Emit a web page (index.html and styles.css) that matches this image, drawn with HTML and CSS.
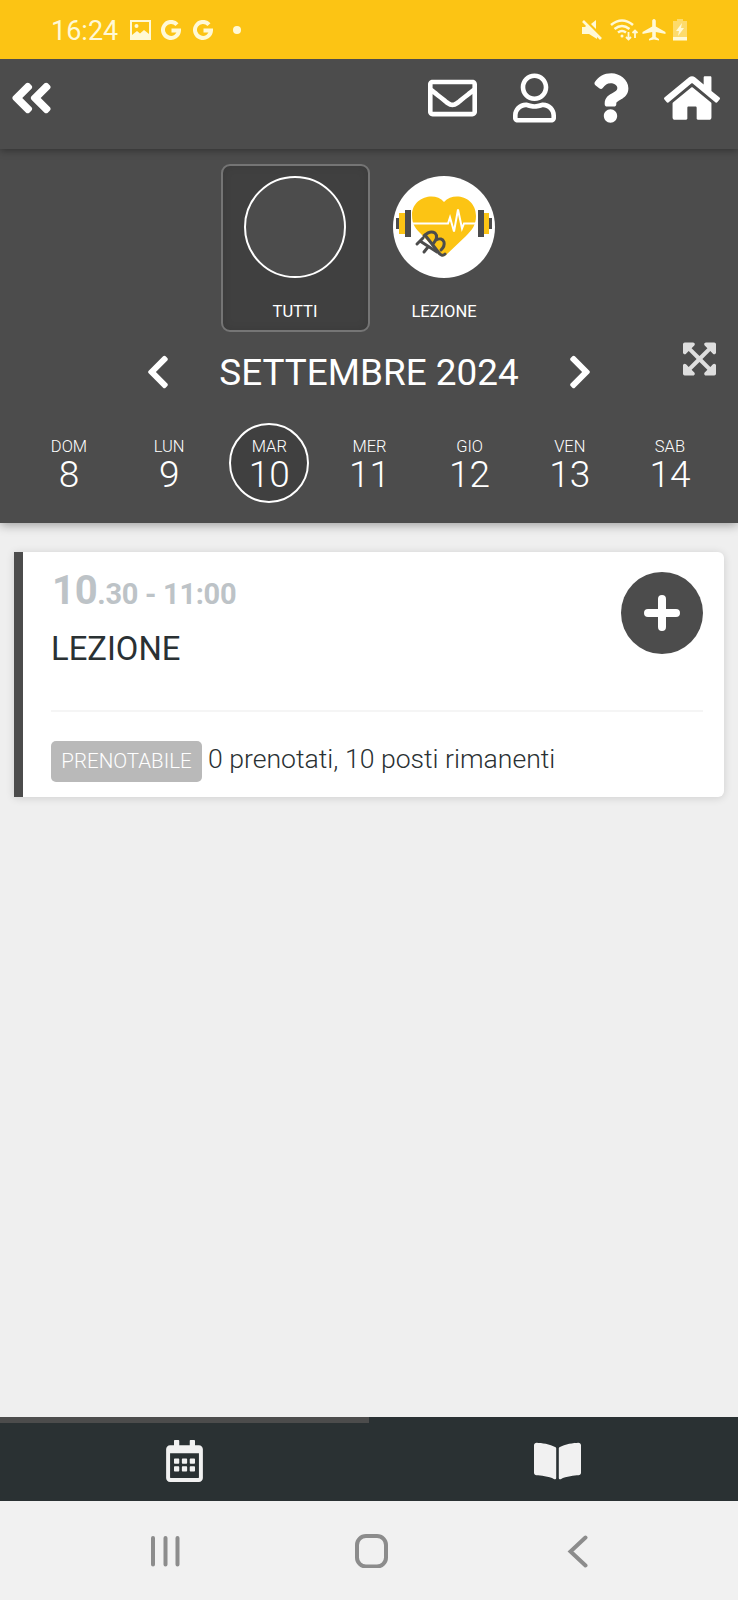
FILE: index.html
```
<!DOCTYPE html>
<html lang="it">
<head>
    <meta charset="UTF-8">
    <meta name="viewport" content="width=device-width, initial-scale=1.0">
    <title>Prenotazioni</title>
    <link rel="stylesheet" href="styles.css">
</head>
<body>
    <!-- Android status bar -->
    <div class="status-bar">
        <div class="status-left">
            <span class="clock">16:24</span>
            <svg class="status-picture" viewBox="0 0 21 20"><path fill-rule="evenodd" d="M0 0h21v20H0zM2 2v13l5-4 3 2.500 4-3.500 5 4V2z"/><circle cx="6.500" cy="6" r="2"/></svg>
            <svg class="status-google" viewBox="0 0 20 20"><path d="M16 4.600A8 8 0 1 0 18 10.500H10.500"/></svg>
            <svg class="status-google" viewBox="0 0 20 20"><path d="M16 4.600A8 8 0 1 0 18 10.500H10.500"/></svg>
            <span class="dot"></span>
        </div>
        <svg class="status-right" viewBox="0 0 108 22">
            <!-- mute -->
            <path d="M1 8h3l2-2 10 10v4l-8-5H1zM10 5l5-4v9z"/>
            <path class="line" d="M2 2l18 18"/>
            <!-- wifi -->
            <path class="line" d="M30 6q11-9 22 0M33.500 10q7.500-6 15 0M37 13.500q4-3 8 0"/>
            <circle cx="41" cy="17" r="1.500"/>
            <path class="thin" d="M47.500 13v7M45 18l2.500 2.500L50 18M54 19v-7M51.500 14l2.500-2.500 2.500 2.500"/>
            <!-- airplane -->
            <path d="M73 0c1.200 0 1.800 1 1.800 2v5.500l9.700 5.500v2l-9.700-2v5l3.200 2v1.500L73 20.500l-5 1V20l3.200-2v-5l-9.700 2v-2l9.700-5.500V2c0-1 .6-2 1.800-2z"/>
            <!-- battery -->
            <path class="faded" d="M96 0h6v2h4v16H92V2h4z"/>
            <path d="M92 18h14v3.500H92zM101 4l-6 8h3l-1 5 6-8h-3z"/>
        </svg>
    </div>

    <div class="toolbar">
        <svg class="icon-back" viewBox="0 0 448 512"><path d="M223.700 239l136-136c9.400-9.400 24.600-9.400 33.900 0l22.600 22.600c9.400 9.400 9.400 24.600 0 33.900L319.900 256l96.400 96.400c9.400 9.400 9.400 24.600 0 33.900L393.700 409c-9.400 9.400-24.600 9.400-33.900 0l-136-136c-9.500-9.400-9.500-24.600-.1-34zm-192 34l136 136c9.400 9.400 24.600 9.400 33.900 0l22.600-22.600c9.400-9.400 9.400-24.600 0-33.900L127.900 256l96.400-96.400c9.400-9.400 9.400-24.600 0-33.900L201.700 103c-9.400-9.400-24.600-9.400-33.900 0l-136 136c-9.500 9.400-9.500 24.600-.1 34z"/></svg>
        <div class="toolbar-actions">
            <svg class="icon-mail" viewBox="0 0 512 512"><path d="M464 64H48C21.490 64 0 85.490 0 112v288c0 26.510 21.490 48 48 48h416c26.510 0 48-21.490 48-48V112c0-26.510-21.490-48-48-48zm0 48v40.805c-22.422 18.259-58.168 46.651-134.587 106.490-16.841 13.247-50.201 45.072-73.413 44.701-23.208.375-56.579-31.459-73.413-44.701C106.180 199.465 70.425 171.067 48 152.805V112h416zM48 400V214.398c22.914 18.251 55.409 43.862 104.938 82.646 21.857 17.205 60.134 55.186 103.062 54.955 42.717.231 80.509-37.199 103.053-54.947 49.528-38.783 82.032-64.401 104.947-82.653V400H48z"/></svg>
            <svg class="icon-user" viewBox="0 0 448 512"><path d="M313.600 304c-28.700 0-42.500 16-89.600 16-47.100 0-60.800-16-89.600-16C60.200 304 0 364.200 0 438.400V464c0 26.500 21.500 48 48 48h352c26.500 0 48-21.500 48-48v-25.600c0-74.200-60.200-134.400-134.400-134.400zM400 464H48v-25.600c0-47.600 38.800-86.400 86.400-86.400 14.600 0 38.300 16 89.600 16 51.700 0 74.900-16 89.600-16 47.600 0 86.400 38.800 86.400 86.400V464zM224 288c79.500 0 144-64.500 144-144S303.500 0 224 0 80 64.500 80 144s64.500 144 144 144zm0-240c52.900 0 96 43.100 96 96s-43.100 96-96 96-96-43.100-96-96 43.100-96 96-96z"/></svg>
            <svg class="icon-help" viewBox="0 0 384 512"><path d="M202.021 0C122.202 0 70.503 32.703 29.914 91.026c-7.363 10.580-5.093 25.086 5.178 32.874l43.138 32.709c10.373 7.865 25.132 6.026 33.253-4.148 25.049-31.381 43.630-49.449 82.757-49.449 30.764 0 68.816 19.799 68.816 49.631 0 22.552-18.617 34.134-48.993 51.164-35.423 19.860-82.299 44.576-82.299 106.405V320c0 13.255 10.745 24 24 24h72.471c13.255 0 24-10.745 24-24v-5.773c0-42.860 125.268-44.645 125.268-160.627C377.504 66.256 286.902 0 202.021 0zM192 373.459c-38.196 0-69.271 31.075-69.271 69.271 0 38.195 31.075 69.270 69.271 69.270s69.271-31.075 69.271-69.271-31.075-69.270-69.271-69.270z"/></svg>
            <svg class="icon-home" viewBox="0 0 576 512"><path d="M488 312.700V456c0 13.300-10.700 24-24 24H348c-6.600 0-12-5.400-12-12V356c0-6.600-5.400-12-12-12h-72c-6.600 0-12 5.400-12 12v112c0 6.600-5.400 12-12 12H112c-13.300 0-24-10.700-24-24V312.700c0-3.600 1.600-7 4.400-9.300l188-154.800c4.400-3.600 10.800-3.600 15.300 0l188 154.800c2.700 2.300 4.300 5.700 4.300 9.300zm83.600-60.900L488 182.900V44.400c0-6.600-5.400-12-12-12h-56c-6.600 0-12 5.400-12 12V117l-89.500-73.700c-17.700-14.600-43.300-14.600-61 0L4.400 251.800c-5.100 4.200-5.800 11.800-1.600 16.900l25.500 31c4.200 5.100 11.800 5.800 16.900 1.600l235.200-193.700c4.400-3.600 10.800-3.600 15.300 0l235.200 193.700c5.100 4.200 12.700 3.500 16.900-1.600l25.500-31c4.200-5.200 3.400-12.700-1.700-16.900z"/></svg>
        </div>
    </div>

    <div class="calendar-panel">
        <div class="filters">
            <div class="filter selected">
                <div class="filter-circle"></div>
                <div class="filter-name">TUTTI</div>
            </div>
            <div class="filter">
                <svg class="filter-logo" viewBox="0 0 102 102">
                    <circle cx="51" cy="51" r="51" fill="#fff"/>
                    <path fill="#fcc414" d="M51 26C42 15 19 21 19 39c0 10 4 14 10 20l20 21q2 1 4-1l20-19c6-6 10-11 10-20C83 21 61 15 51 26z"/>
                    <path fill="none" stroke="#fff" stroke-width="2" d="M20 47.500h35l2-6 4 14 4-22 4 19 2-5h12"/>
                    <path fill="#4c4c4c" d="M12 34h6v27h-6zM3 42h4v11H3zM85 34h6v27h-6zM95 42h4v11h-4z"/>
                    <path fill="#fcc414" d="M6 37h6v21H6zM91 37h5v21h-5z"/>
                    <!-- FB monogram, tilted on the heart -->
                    <g fill="none" stroke="#4c4c4c" stroke-width="3" stroke-linecap="round" stroke-linejoin="round">
                        <path d="M32 59L46 77q3 4 6 1"/>
                        <path d="M31 60q6-6 11-3 4 4-2 11M43 64q6-3 8 2 1 4-3 8"/>
                        <path d="M24 68l6-6M27 65l17 11M31 76l4-5"/>
                    </g>
                </svg>
                <div class="filter-name">LEZIONE</div>
            </div>
        </div>

        <div class="month-row">
            <svg class="chevron" viewBox="0 0 320 512"><path d="M34.520 239.030L228.870 44.690c9.370-9.370 24.570-9.370 33.940 0l22.670 22.670c9.360 9.360 9.370 24.520.04 33.900L131.490 256l154.020 154.750c9.340 9.380 9.320 24.540-.04 33.900l-22.670 22.670c-9.370 9.370-24.570 9.370-33.940 0L34.520 272.970c-9.370-9.370-9.370-24.570 0-33.940z"/></svg>
            <div class="month">SETTEMBRE 2024</div>
            <svg class="chevron next" viewBox="0 0 320 512"><path d="M34.520 239.030L228.870 44.690c9.370-9.370 24.570-9.370 33.940 0l22.670 22.670c9.360 9.360 9.370 24.520.04 33.900L131.490 256l154.020 154.750c9.340 9.380 9.320 24.540-.04 33.900l-22.670 22.670c-9.370 9.370-24.570 9.370-33.940 0L34.520 272.970c-9.370-9.370-9.370-24.570 0-33.940z"/></svg>
            <svg class="icon-expand" viewBox="0 0 448 512"><path d="M448 344v112a23.940 23.940 0 0 1-24 24H312c-21.390 0-32.090-25.900-17-41l36.200-36.200L224 295.600 116.770 402.900 153 439c15.090 15.100 4.390 41-17 41H24a23.940 23.940 0 0 1-24-24V344c0-21.400 25.890-32.100 41-17l36.190 36.200L184.460 256 77.180 148.700 41 185c-15.100 15.100-41 4.400-41-17V56a23.940 23.940 0 0 1 24-24h112c21.390 0 32.090 25.900 17 41l-36.200 36.200L224 216.400l107.230-107.300L295 73c-15.090-15.100-4.390-41 17-41h112a23.940 23.940 0 0 1 24 24v112c0 21.400-25.890 32.100-41 17l-36.190-36.200L263.540 256l107.280 107.300L407 327.100c15.100-15.200 41-4.500 41 16.900z"/></svg>
        </div>

        <div class="week">
            <div class="day"><span class="day-name">DOM</span><span class="day-number">8</span></div>
            <div class="day"><span class="day-name">LUN</span><span class="day-number">9</span></div>
            <div class="day today"><span class="day-name">MAR</span><span class="day-number">10</span></div>
            <div class="day"><span class="day-name">MER</span><span class="day-number">11</span></div>
            <div class="day"><span class="day-name">GIO</span><span class="day-number">12</span></div>
            <div class="day"><span class="day-name">VEN</span><span class="day-number">13</span></div>
            <div class="day"><span class="day-name">SAB</span><span class="day-number">14</span></div>
        </div>
    </div>

    <div class="content">
        <div class="lesson">
            <div class="lesson-top">
                <div>
                    <div class="lesson-time"><span class="hour">10</span>.30 - 11:00</div>
                    <div class="lesson-title">LEZIONE</div>
                </div>
                <div class="add-button">
                    <svg viewBox="0 0 36 36"><path d="M18 4v28M4 18h28"/></svg>
                </div>
            </div>
            <div class="lesson-bottom">
                <span class="badge">PRENOTABILE</span>
                <span class="places">0 prenotati, 10 posti rimanenti</span>
            </div>
        </div>
    </div>

    <div class="tabs">
        <div class="tab active">
            <svg class="icon-calendar" viewBox="0 0 448 512"><path d="M148 288h-40c-6.600 0-12-5.400-12-12v-40c0-6.600 5.400-12 12-12h40c6.600 0 12 5.400 12 12v40c0 6.600-5.400 12-12 12zm108-12v-40c0-6.600-5.400-12-12-12h-40c-6.600 0-12 5.400-12 12v40c0 6.600 5.400 12 12 12h40c6.600 0 12-5.400 12-12zm96 0v-40c0-6.600-5.400-12-12-12h-40c-6.600 0-12 5.400-12 12v40c0 6.600 5.400 12 12 12h40c6.600 0 12-5.400 12-12zm-96 96v-40c0-6.600-5.400-12-12-12h-40c-6.600 0-12 5.400-12 12v40c0 6.600 5.400 12 12 12h40c6.600 0 12-5.400 12-12zm-96 0v-40c0-6.600-5.400-12-12-12h-40c-6.600 0-12 5.400-12 12v40c0 6.600 5.400 12 12 12h40c6.600 0 12-5.400 12-12zm192 0v-40c0-6.600-5.400-12-12-12h-40c-6.600 0-12 5.400-12 12v40c0 6.600 5.400 12 12 12h40c6.600 0 12-5.400 12-12zm96-260v352c0 26.500-21.500 48-48 48H48c-26.500 0-48-21.500-48-48V112c0-26.500 21.500-48 48-48h48V12c0-6.600 5.400-12 12-12h40c6.600 0 12 5.400 12 12v52h128V12c0-6.600 5.400-12 12-12h40c6.600 0 12 5.400 12 12v52h48c26.500 0 48 21.500 48 48zm-48 346V160H48v298c0 3.300 2.700 6 6 6h340c3.300 0 6-2.700 6-6z"/></svg>
        </div>
        <div class="tab">
            <svg class="icon-book" viewBox="0 0 576 512"><path d="M542.220 32.050c-54.800 3.110-163.720 14.430-230.960 55.590-4.640 2.840-7.270 7.890-7.270 13.170v363.870c0 11.550 12.630 18.850 23.280 13.490 69.180-34.820 169.230-44.320 218.700-46.920 16.890-.89 30.020-14.430 30.020-30.660V62.750c.01-17.710-15.350-31.740-33.770-30.700zM264.730 87.640C197.500 46.480 88.580 35.170 33.780 32.050 15.360 31.010 0 45.040 0 62.750V400.600c0 16.240 13.130 29.780 30.020 30.660 49.490 2.600 149.590 12.110 218.770 46.950 10.620 5.350 23.210-1.940 23.210-13.460V100.630c0-5.290-2.620-10.140-7.270-12.990z"/></svg>
        </div>
    </div>

    <!-- Android navigation -->
    <div class="nav-bar">
        <svg viewBox="0 0 34 34"><path d="M4 4v26.500M16.500 4v26.500M28.500 4v26.500"/></svg>
        <svg viewBox="0 0 34 34"><rect x="2" y="2" width="29" height="30.500" rx="9"/></svg>
        <svg viewBox="0 0 34 34"><path d="M24.500 3.500L9.500 17.500l15 14"/></svg>
    </div>
</body>
</html>
```
FILE: styles.css
```
* {
    box-sizing: border-box;
}
body {
    margin: 0;
    height: 1600px;
    display: flex;
    flex-direction: column;
    font-family: Roboto, "Liberation Sans", sans-serif;
    background-color: #efefef;
    color: #2a3133;
}
svg {
    display: block;
    flex-shrink: 0;
}
.status-bar {
    height: 59px;
    background-color: #fcc414;
    display: flex;
    justify-content: space-between;
    align-items: center;
    padding: 0 49px 0 51px;
    fill: #fff9d6;
    color: #fff9d6;
    z-index: 3;
}
.status-left {
    display: flex;
    align-items: center;
}
.clock {
    width: 79px;
    font-size: 27px;
    line-height: 32px;
    padding-top: 3px;
}
.status-picture {
    width: 21px;
    height: 20px;
    margin-right: 10px;
}
.status-google {
    width: 20px;
    height: 20px;
    margin-right: 12px;
    fill: none;
    stroke: #fff9d6;
    stroke-width: 4;
}
.dot {
    width: 8px;
    height: 8px;
    margin-left: 8px;
    border-radius: 50%;
    background-color: #fff9d6;
}
.status-right {
    width: 108px;
    height: 22px;
}
.status-right .line {
    fill: none;
    stroke: #fff9d6;
    stroke-width: 2.6;
}
.status-right .thin {
    fill: none;
    stroke: #fff9d6;
    stroke-width: 1.8;
}
.status-right .faded {
    opacity: 0.45;
}
.toolbar {
    height: 90px;
    background-color: #4c4c4c;
    display: flex;
    justify-content: space-between;
    align-items: center;
    padding: 0 18px 12px 10px;
    fill: #fff;
    box-shadow: 0 1px 8px rgba(0,0,0,0.4);
    z-index: 2;
}
.toolbar-actions {
    display: flex;
    align-items: center;
}
.icon-back {
    width: 43px;
    height: 50px;
}
.icon-mail {
    width: 49px;
    height: 50px;
    margin-right: 36px;
}
.icon-user {
    width: 43px;
    height: 50px;
    margin-right: 36px;
}
.icon-help {
    width: 37px;
    height: 50px;
    margin-right: 35px;
}
.icon-home {
    width: 56px;
    height: 50px;
}
.calendar-panel {
    height: 374px;
    background-color: #4c4c4c;
    color: #fff;
    padding-top: 15px;
    box-shadow: 0 2px 10px rgba(0,0,0,0.35);
    z-index: 1;
}
.filters {
    display: flex;
    justify-content: center;
    padding-left: 1px;
}
.filter {
    width: 149px;
    height: 168px;
    padding-top: 10px;
    border: 2px solid transparent;
    border-radius: 9px;
    display: flex;
    flex-direction: column;
    align-items: center;
}
.filter.selected {
    background-color: #404040;
    border-color: #757575;
    box-shadow: inset 0 0 10px rgba(0,0,0,0.1);
}
.filter-circle {
    width: 102px;
    height: 102px;
    border: 2px solid #fff;
    border-radius: 50%;
    background-color: #4c4c4c;
}
.filter-logo {
    width: 102px;
    height: 102px;
}
.filter-name {
    margin-top: 24px;
    font-size: 16.5px;
    line-height: 20px;
}
.month-row {
    height: 82px;
    display: flex;
    align-items: center;
    padding: 0 22px 0 146px;
}
.chevron {
    width: 24px;
    height: 38px;
    margin-bottom: 2px;
    fill: #fff;
}
.chevron.next {
    transform: rotate(180deg);
}
.month {
    width: 398px;
    font-size: 36.9px;
    line-height: 42px;
    text-align: center;
}
.icon-expand {
    width: 33px;
    height: 38px;
    margin: 0 0 28px auto;
    fill: #dedede;
}
.week {
    display: flex;
    justify-content: space-between;
    padding: 9px 28px 0 29px;
}
.day {
    width: 80px;
    height: 80px;
    padding-top: 13px;
    border: 2px solid transparent;
    border-radius: 50%;
    display: flex;
    flex-direction: column;
    align-items: center;
    font-weight: 300;
}
.day.today {
    border-color: #fff;
    background-color: #404040;
}
.day-name {
    font-size: 16.5px;
    line-height: 18px;
}
.day-number {
    font-size: 37px;
    line-height: 38px;
}
.content {
    flex: 1;
    padding: 29px 14px 0;
}
.lesson {
    height: 245px;
    padding: 20px 21px 0 28px;
    border-left: 9px solid #4c4c4c;
    border-radius: 0 6px 6px 0;
    background-color: #fff;
    box-shadow: 0 1px 8px rgba(0,0,0,0.14);
}
.lesson-top {
    height: 140px;
    display: flex;
    justify-content: space-between;
    border-bottom: 2px solid #f5f5f5;
}
.lesson-time {
    padding-left: 1px;
    font-size: 29px;
    line-height: 37px;
    letter-spacing: -0.3px;
    font-weight: bold;
    color: #bdc3c7;
}
.hour {
    font-size: 40px;
}
.lesson-title {
    margin-top: 17px;
    font-size: 32.8px;
    line-height: 38px;
}
.add-button {
    width: 82px;
    height: 82px;
    border-radius: 50%;
    background-color: #4c4c4c;
    display: flex;
    align-items: center;
    justify-content: center;
}
.add-button svg {
    width: 36px;
    height: 36px;
    stroke: #fff;
    stroke-width: 8;
    stroke-linecap: round;
}
.lesson-bottom {
    display: flex;
    align-items: flex-start;
    padding-top: 29px;
    font-weight: 300;
}
.badge {
    width: 151px;
    height: 41px;
    border-radius: 5px;
    background-color: #b9b9b9;
    color: #fff;
    font-size: 20.5px;
    line-height: 41px;
    text-align: center;
}
.places {
    margin-left: 6px;
    font-size: 26.6px;
    line-height: 36px;
}
.tabs {
    height: 84px;
    display: flex;
    background-color: #2a3133;
    fill: #f1f1f1;
}
.tab {
    flex: 1;
    display: flex;
    justify-content: center;
    padding-top: 17px;
    border-top: 6px solid transparent;
}
.tab.active {
    border-top-color: #4c4c4c;
}
.icon-calendar {
    width: 37px;
    height: 42px;
}
.icon-book {
    width: 47px;
    height: 42px;
    margin-left: 8px;
}
.nav-bar {
    height: 99px;
    background-color: #f1f1f1;
    display: flex;
    justify-content: space-between;
    align-items: center;
    padding: 0 143px 0 149px;
    fill: none;
    stroke: #8c8c8c;
    stroke-width: 4;
    stroke-linecap: round;
}
.nav-bar svg {
    width: 34px;
    height: 34px;
}
```
